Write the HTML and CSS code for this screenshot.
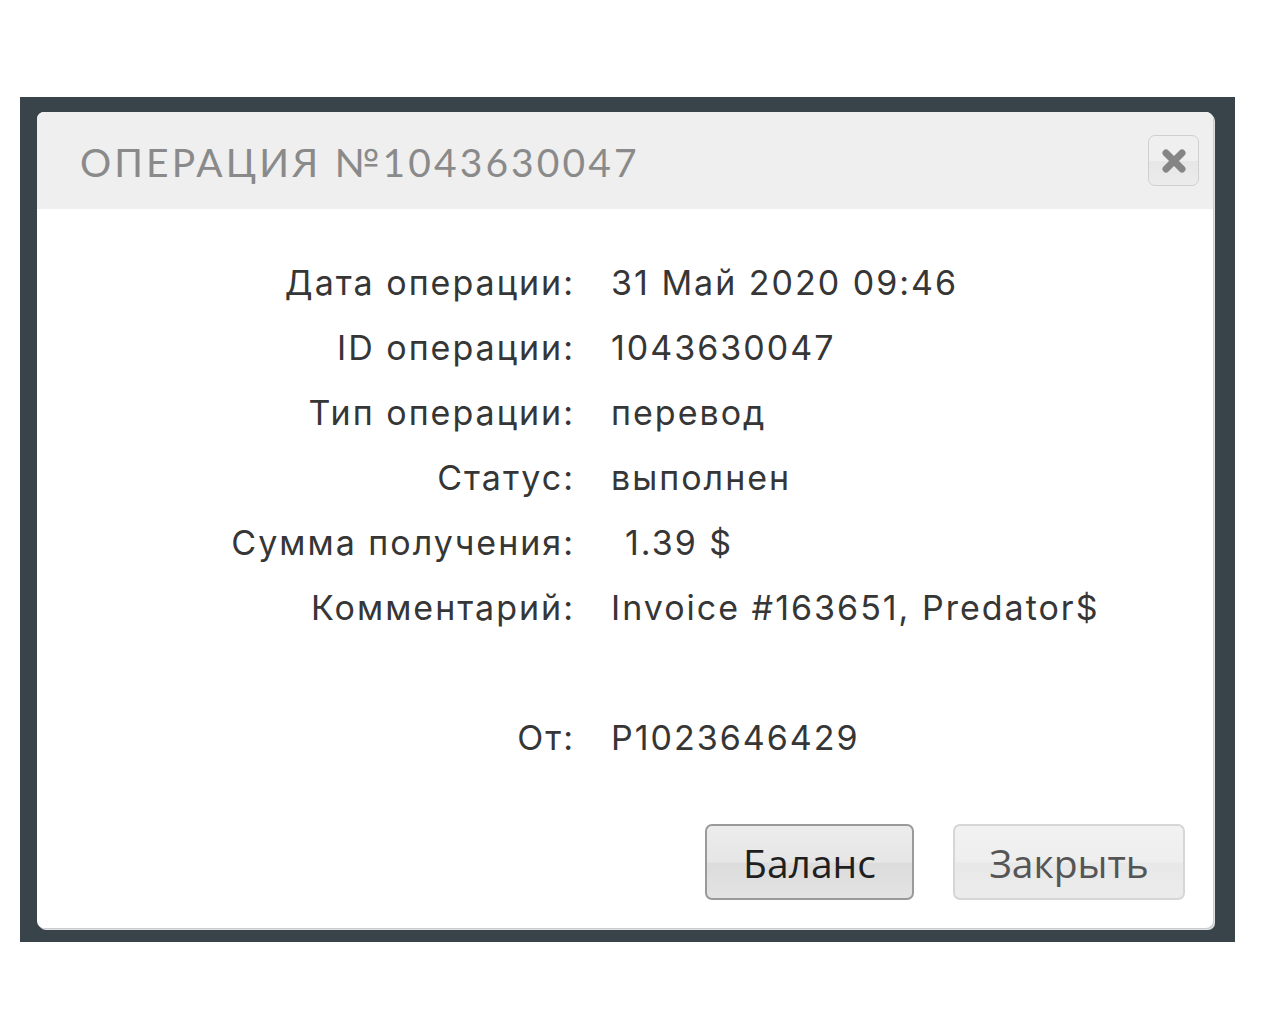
FILE: index.html
```html
<!DOCTYPE html>
<html lang="ru">
<head>
<meta charset="utf-8">
<title>Операция</title>
<link rel="stylesheet" href="styles.css">
</head>
<body>
<div class="overlay">
  <div class="modal">
    <div class="modal-header">
      <h1 class="modal-title">ОПЕРАЦИЯ №1043630047</h1>
      <button class="close-btn" aria-label="Закрыть">
        <svg width="28" height="28" viewBox="0 0 28 28">
          <path d="M6 6 L22 22 M22 6 L6 22" stroke="#858585" stroke-width="7" stroke-linecap="round"/>
        </svg>
      </button>
    </div>
    <div class="modal-body">
      <dl class="details">
        <dt>Дата операции:</dt><dd>31 Май 2020 09:46</dd>
        <dt>ID операции:</dt><dd>1043630047</dd>
        <dt>Тип операции:</dt><dd>перевод</dd>
        <dt>Статус:</dt><dd>выполнен</dd>
        <dt>Сумма получения:</dt><dd class="amount">1.39 $</dd>
        <dt>Комментарий:</dt><dd>Invoice #163651, Predator$</dd>
        <dt class="spacer"></dt><dd class="spacer"></dd>
        <dt>От:</dt><dd>P1023646429</dd>
      </dl>
    </div>
    <div class="modal-footer">
      <button class="btn btn-primary">Баланс</button>
      <button class="btn btn-secondary">Закрыть</button>
    </div>
  </div>
</div>
</body>
</html>
```
FILE: styles.css
```css
html, body {
  margin: 0;
  padding: 0;
  background: #ffffff;
}
body {
  padding-top: 97px;
  padding-left: 20px;
}
.overlay {
  width: 1215px;
  height: 845px;
  background: #384449;
  box-sizing: border-box;
  padding: 15px 0 0 17px;
}
.modal {
  width: 1176px;
  height: 816px;
  background: #ffffff;
  border-radius: 7px;
  box-shadow: 1px 1px 0 #c9cbcc, 2px 2px 0 #dfe1e2;
  display: flex;
  flex-direction: column;
  overflow: hidden;
}
.modal-header {
  height: 97px;
  background: #efefef;
  display: flex;
  align-items: flex-start;
  justify-content: space-between;
  padding: 0 14px 0 43px;
}
.modal-title {
  margin: 0;
  padding-top: 30px;
  font-family: "Lato", "DejaVu Sans", sans-serif;
  font-weight: 400;
  font-size: 39px;
  line-height: 40px;
  letter-spacing: 3.1px;
  color: #8a8a8a;
}
.close-btn {
  margin-top: 23px;
  width: 51px;
  height: 51px;
  border: 1px solid #cfcfcf;
  border-radius: 7px;
  background: linear-gradient(#efefef 0%, #efefef 50%, #e6e6e6 51%, #ececec 100%);
  display: flex;
  align-items: center;
  justify-content: center;
  padding: 0;
}
.modal-body {
  padding-top: 41px;
}
.details {
  margin: 0;
  display: grid;
  grid-template-columns: 538px 1fr;
  column-gap: 36px;
  font-family: "Inter", "Noto Sans", sans-serif;
  font-size: 34px;
  letter-spacing: 2px;
  line-height: 65px;
  color: #363636;
}
.details dt {
  text-align: right;
  margin: 0;
}
.details dd {
  margin: 0;
}
.details .spacer {
  height: 65px;
}
.details .amount {
  padding-left: 14px;
}
.modal-footer {
  margin-top: auto;
  display: flex;
  justify-content: flex-end;
  gap: 39px;
  padding: 0 28px 28px 0;
}
.btn {
  height: 76px;
  border-radius: 7px;
  font-family: "Open Sans", "Noto Sans", sans-serif;
  font-size: 39px;
  padding: 0;
}
.btn-primary {
  width: 209px;
  border: 2px solid #9a9a9a;
  background: linear-gradient(#ececec 0%, #e6e6e6 50%, #dcdcdc 52%, #e3e3e3 100%);
  color: #1f1f1f;
}
.btn-secondary {
  width: 232px;
  border: 2px solid #d6d6d6;
  background: linear-gradient(#f2f2f2 0%, #eeeeee 50%, #e8e8e8 52%, #ececec 100%);
  color: #555555;
}
```
